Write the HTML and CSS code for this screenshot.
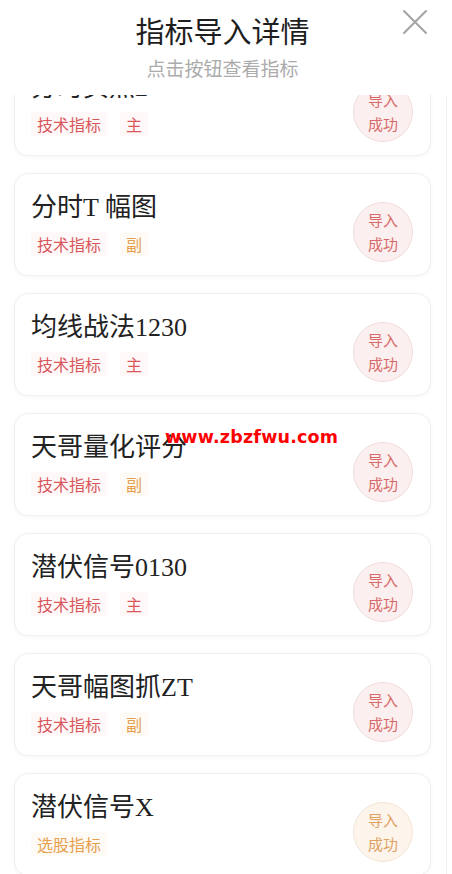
FILE: index.html
```html
<!DOCTYPE html>
<html lang="zh-CN">

<head>
    <meta charset="UTF-8">
    <meta name="viewport" content="width=device-width, initial-scale=1.0">
    <title>指标导入详情</title>
    <link rel="stylesheet" href="styles.css">
</head>

<body>
    <!-- 顶部标题 -->
    <header class="sheet-header">
        <h1 class="sheet-title">指标导入详情</h1>
        <p class="sheet-subtitle">点击按钮查看指标</p>
        <button class="btn-close" aria-label="关闭">
            <svg width="26" height="26" viewBox="0 0 26 26">
                <path d="M2 2 L24 24 M24 2 L2 24" stroke="#a3a3a3" stroke-width="2" fill="none" stroke-linecap="round"/>
            </svg>
        </button>
    </header>

    <!-- 指标列表 -->
    <div class="list-wrap">
        <ul class="ind-list">
            <li class="ind-card">
                <div class="ind-info">
                    <div class="ind-name">分时买点2</div>
                    <div class="ind-tags">
                        <span class="tag tag-red">技术指标</span>
                        <span class="tag tag-red">主</span>
                    </div>
                </div>
                <div class="status status-red">导入<br>成功</div>
            </li>
            <li class="ind-card">
                <div class="ind-info">
                    <div class="ind-name">分时T 幅图</div>
                    <div class="ind-tags">
                        <span class="tag tag-red">技术指标</span>
                        <span class="tag tag-orange">副</span>
                    </div>
                </div>
                <div class="status status-red">导入<br>成功</div>
            </li>
            <li class="ind-card">
                <div class="ind-info">
                    <div class="ind-name">均线战法1230</div>
                    <div class="ind-tags">
                        <span class="tag tag-red">技术指标</span>
                        <span class="tag tag-red">主</span>
                    </div>
                </div>
                <div class="status status-red">导入<br>成功</div>
            </li>
            <li class="ind-card">
                <div class="ind-info">
                    <div class="ind-name">天哥量化评分</div>
                    <div class="ind-tags">
                        <span class="tag tag-red">技术指标</span>
                        <span class="tag tag-orange">副</span>
                    </div>
                </div>
                <div class="status status-red">导入<br>成功</div>
            </li>
            <li class="ind-card">
                <div class="ind-info">
                    <div class="ind-name">潜伏信号0130</div>
                    <div class="ind-tags">
                        <span class="tag tag-red">技术指标</span>
                        <span class="tag tag-red">主</span>
                    </div>
                </div>
                <div class="status status-red">导入<br>成功</div>
            </li>
            <li class="ind-card">
                <div class="ind-info">
                    <div class="ind-name">天哥幅图抓ZT</div>
                    <div class="ind-tags">
                        <span class="tag tag-red">技术指标</span>
                        <span class="tag tag-orange">副</span>
                    </div>
                </div>
                <div class="status status-red">导入<br>成功</div>
            </li>
            <li class="ind-card">
                <div class="ind-info">
                    <div class="ind-name">潜伏信号X</div>
                    <div class="ind-tags">
                        <span class="tag tag-orange">选股指标</span>
                    </div>
                </div>
                <div class="status status-orange">导入<br>成功</div>
            </li>
        </ul>
    </div>

    <!-- 水印 -->
    <div class="watermark">www.zbzfwu.com</div>
</body>

</html>
```

FILE: styles.css
```css
/* 基础样式 */
body {
    margin: 0;
    background-color: #fff;
    font-family: "Noto Sans CJK SC", sans-serif;
    height: 874px;
    overflow: hidden;
}

/* 顶部标题 */
.sheet-header {
    position: relative;
    height: 95px;
    padding-top: 12px;
    padding-right: 7px;
    box-sizing: border-box;
    text-align: center;
}

.sheet-title {
    margin: 0;
    font-size: 29px;
    line-height: 36px;
    font-weight: 400;
    color: #1e1e1e;
}

.sheet-subtitle {
    margin: 7px 0 0;
    font-size: 19px;
    line-height: 26px;
    color: #ababab;
}

.btn-close {
    position: absolute;
    top: 9px;
    left: 402px;
    padding: 0;
    border: none;
    background: none;
    width: 26px;
    height: 26px;
}

/* 列表 */
.list-wrap {
    height: 779px;
    width: 446px;
    overflow: hidden;
    border-right: 1px solid #f1f1f1;
}

.ind-list {
    list-style: none;
    margin: -42px 0 0;
    padding: 0 0 0 14px;
    display: flex;
    flex-direction: column;
    gap: 17px;
}

.ind-card {
    width: 417px;
    height: 103px;
    box-sizing: border-box;
    display: flex;
    align-items: flex-start;
    justify-content: space-between;
    padding: 18px 17px 0 16px;
    border: 1px solid #efefef;
    border-radius: 14px;
    box-shadow: 0 1px 4px rgba(0, 0, 0, 0.04);
    background-color: #fff;
}

.ind-name {
    font-family: "Liberation Serif", "Noto Sans CJK SC", serif;
    font-size: 26px;
    line-height: 32px;
    color: #222;
}

.ind-tags {
    display: flex;
    gap: 13px;
    margin-top: 8px;
}

.tag {
    font-size: 16px;
    line-height: 24px;
    padding: 0 6px;
    border-radius: 3px;
}

.tag-red {
    color: #d8585c;
    background-color: #fef8f8;
}

.tag-orange {
    color: #e6a04e;
    background-color: #fefaf5;
}

/* 导入状态 */
.status {
    width: 60px;
    height: 60px;
    margin-top: 10px;
    box-sizing: border-box;
    border-radius: 50%;
    display: flex;
    align-items: center;
    justify-content: center;
    text-align: center;
    font-size: 15px;
    line-height: 24px;
}

.status-red {
    color: #d86a6a;
    background-color: #fcefef;
    border: 1px solid #f1dcdc;
}

.status-orange {
    color: #e0a263;
    background-color: #fdf4ec;
    border: 1px solid #f3e5d6;
}

/* 水印 */
.watermark {
    position: absolute;
    top: 426px;
    left: 165px;
    font-family: "DejaVu Sans", sans-serif;
    font-weight: bold;
    font-size: 17.5px;
    letter-spacing: 0.2px;
    line-height: 22px;
    color: #ff0000;
}
```
